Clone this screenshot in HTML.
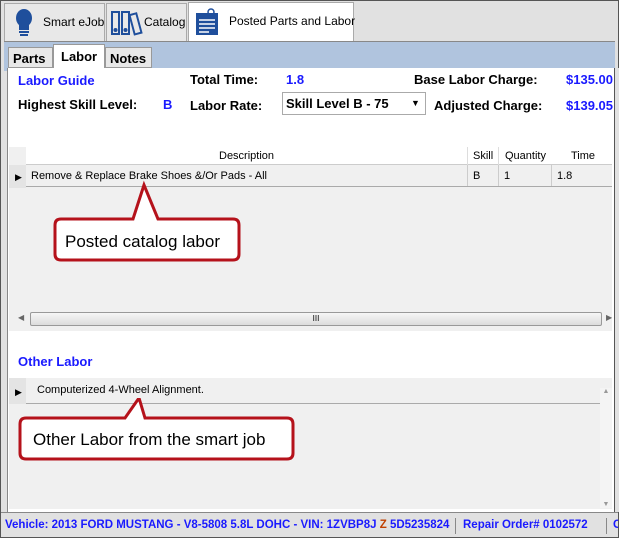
<!DOCTYPE html>
<html><head><style>
*{margin:0;padding:0;box-sizing:border-box}
body{width:619px;height:538px;overflow:hidden;font-family:"Liberation Sans",sans-serif;background:#fff;position:relative}
.a{position:absolute}
.b{font-weight:bold;font-size:13px}
.blue{color:#1a1aff}
</style></head><body>
<div class="a" style="left:0;top:0;width:619px;height:538px;border:1px solid #555;background:#e1e1e1"></div>
<!-- top tabs -->
<div class="a" style="left:4px;top:3px;width:101px;height:38px;background:#e8e8e8;border:1px solid #aaa;border-bottom:none"></div>
<svg class="a" style="left:12px;top:8px" width="24" height="30"><ellipse cx="12" cy="10" rx="8" ry="9" fill="#1f4f9c"/><rect x="7" y="17" width="10" height="5" fill="#1f4f9c"/><rect x="7" y="23" width="10" height="2" fill="#1f4f9c"/><rect x="8" y="26" width="8" height="2" fill="#1f4f9c"/></svg>
<div class="a" style="left:43px;top:15px;font-size:12px">Smart eJob</div>
<div class="a" style="left:106px;top:3px;width:81px;height:38px;background:#e8e8e8;border:1px solid #aaa;border-bottom:none"></div>
<svg class="a" style="left:110px;top:10px" width="34" height="26"><g fill="none" stroke="#1f4f9c" stroke-width="2"><rect x="2" y="2" width="7" height="22"/><rect x="12" y="2" width="7" height="22"/><rect x="22" y="4" width="7" height="20" transform="rotate(-15 25 14)"/></g><circle cx="5.5" cy="20" r="2" fill="#1f4f9c"/><circle cx="15.5" cy="20" r="2" fill="#1f4f9c"/></svg>
<div class="a" style="left:144px;top:15px;font-size:12px">Catalog</div>
<div class="a" style="left:188px;top:2px;width:166px;height:40px;background:#fff;border:1px solid #aaa;border-bottom:none"></div>
<svg class="a" style="left:195px;top:8px" width="24" height="28"><rect x="1" y="5" width="22" height="22" fill="#1f4f9c"/><g stroke="#fff" stroke-width="1.5"><line x1="4" y1="12" x2="20" y2="12"/><line x1="4" y1="16" x2="20" y2="16"/><line x1="4" y1="20" x2="20" y2="20"/><line x1="4" y1="24" x2="14" y2="24"/></g><circle cx="16" cy="4" r="3" fill="none" stroke="#1f4f9c" stroke-width="1.5"/></svg>
<div class="a" style="left:229px;top:14px;font-size:12px">Posted Parts and Labor</div>
<!-- blue band -->
<div class="a" style="left:4px;top:41px;width:611px;height:30px;background:#b0c4de;border-top:1px solid #888"></div>
<div class="a" style="left:8px;top:47px;width:45px;height:21px;background:#e8e8e8;border:1px solid #999;font-weight:bold;font-size:13px;padding:3px 0 0 4px">Parts</div>
<div class="a" style="left:53px;top:44px;width:52px;height:25px;background:#fff;border:1px solid #999;border-bottom:none;font-weight:bold;font-size:13px;padding:4px 0 0 7px">Labor</div>
<div class="a" style="left:105px;top:47px;width:47px;height:21px;background:#e8e8e8;border:1px solid #999;font-weight:bold;font-size:13px;padding:3px 0 0 4px">Notes</div>
<!-- content -->
<div class="a" style="left:7px;top:68px;width:607px;height:444px;background:#fff;border-left:1px solid #888;overflow:hidden">
<div class="a b" style="left:558px;top:4px;color:#1a1aff;white-space:nowrap">$135.00</div>
<div class="a b" style="left:558px;top:30px;color:#1a1aff;white-space:nowrap">$139.05</div>
</div>
<div class="a b blue" style="left:18px;top:73px">Labor Guide</div>
<div class="a b" style="left:190px;top:72px">Total Time:</div>
<div class="a b blue" style="left:286px;top:72px">1.8</div>
<div class="a b" style="left:414px;top:72px">Base Labor Charge:</div>
<div class="a b" style="left:18px;top:97px">Highest Skill Level:</div>
<div class="a b blue" style="left:163px;top:97px">B</div>
<div class="a b" style="left:190px;top:98px">Labor Rate:</div>
<div class="a" style="left:282px;top:92px;width:144px;height:23px;border:1px solid #aaa;background:#fff;font-weight:bold;font-size:13px;padding:3px 0 0 3px">Skill Level B - 75<span style="position:absolute;left:128px;top:5px;font-size:9px">▼</span></div>
<div class="a b" style="left:434px;top:98px">Adjusted Charge:</div>
<div class="a" style="left:614px;top:68px;width:5px;height:444px;background:#e1e1e1;border-left:1px solid #555"></div>
<!-- grid 1 -->
<div class="a" style="left:9px;top:147px;width:603px;height:184px;background:#f0f0f0"></div>
<div class="a" style="left:26px;top:147px;width:586px;height:18px;background:#fff;border-bottom:1px solid #ccc;font-size:11px;line-height:18px">
<span class="a" style="left:193px">Description</span><span class="a" style="left:441px;border-left:1px solid #ddd;padding-left:5px;height:18px">Skill</span><span class="a" style="left:472px;border-left:1px solid #ddd;padding-left:6px">Quantity</span><span class="a" style="left:545px">Time</span></div>
<div class="a" style="left:9px;top:165px;width:17px;height:23px;background:#e4e4e4;font-size:9px;padding:7px 0 0 6px">▶</div>
<div class="a" style="left:26px;top:165px;width:586px;height:22px;background:#f0f0f0;border-bottom:1px solid #aaa;font-size:11px;line-height:22px">
<span class="a" style="left:5px">Remove &amp; Replace Brake Shoes &amp;/Or Pads - All</span><span class="a" style="left:441px;border-left:1px solid #ccc;padding-left:5px;height:21px">B</span><span class="a" style="left:472px;border-left:1px solid #ccc;padding-left:5px;height:21px">1</span><span class="a" style="left:525px;border-left:1px solid #ccc;padding-left:5px;height:21px">1.8</span></div>
<div class="a" style="left:30px;top:312px;width:572px;height:14px;border:1px solid #999;border-radius:2px;background:linear-gradient(#f6f6f6,#dcdcdc);font-size:8px;text-align:center;line-height:12px">III</div>
<div class="a" style="left:18px;top:313px;font-size:8px;color:#666">◀</div>
<div class="a" style="left:606px;top:313px;font-size:8px;color:#666">▶</div>
<svg class="a" style="left:50px;top:180px" width="200" height="85"><path d="M5,45 Q5,39 11,39 L83,39 L94,5 L108,39 L183,39 Q189,39 189,45 L189,74 Q189,80 183,80 L11,80 Q5,80 5,74 Z" fill="#fff" stroke="#b5121b" stroke-width="3"/><text x="15" y="67" font-family="Liberation Sans" font-size="17">Posted catalog labor</text></svg>
<!-- other labor -->
<div class="a b blue" style="left:18px;top:354px">Other Labor</div>
<div class="a" style="left:9px;top:378px;width:603px;height:131px;background:#f0f0f0"></div>
<div class="a" style="left:9px;top:378px;width:17px;height:26px;background:#e4e4e4;font-size:9px;padding:9px 0 0 6px">▶</div>
<div class="a" style="left:26px;top:378px;width:574px;height:26px;border-bottom:1px solid #aaa;font-size:11px;line-height:24px;padding-left:11px">Computerized 4-Wheel Alignment.</div>
<div class="a" style="left:600px;top:388px;width:12px;height:120px;background:#f4f4f4;font-size:7px;color:#999;text-align:center">▲<div style="position:absolute;bottom:0;width:12px">▼</div></div>
<svg class="a" style="left:15px;top:398px" width="285" height="65"><path d="M5,26 Q5,20 11,20 L110,20 L124,0 L130,20 L272,20 Q278,20 278,26 L278,55 Q278,61 272,61 L11,61 Q5,61 5,55 Z" fill="#fff" stroke="#b5121b" stroke-width="3"/><text x="18" y="47" font-family="Liberation Sans" font-size="17">Other Labor from the smart job</text></svg>
<!-- status -->
<div class="a" style="left:1px;top:512px;width:617px;height:25px;background:#e1e1e1;border-top:1px solid #888;font-weight:bold;font-size:11.5px;color:#1a1aff;line-height:25px;white-space:nowrap;overflow:hidden">
<span class="a" style="left:4px">Vehicle: 2013 FORD MUSTANG - V8-5808 5.8L DOHC - VIN: 1ZVBP8J <span style="color:#c04000">Z</span> 5D5235824</span>
<span class="a" style="left:454px;top:5px;height:16px;border-left:1px solid #888"></span>
<span class="a" style="left:462px">Repair Order# 0102572</span>
<span class="a" style="left:605px;top:5px;height:16px;border-left:1px solid #888"></span>
<span class="a" style="left:612px">C</span></div>
</body></html>
